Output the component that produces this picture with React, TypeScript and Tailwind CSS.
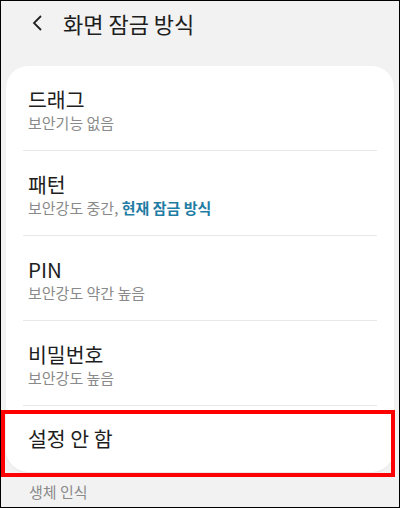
const items = [
  { title: "드래그", sub: "보안기능 없음" },
  { title: "패턴", sub: "보안강도 중간, ", current: "현재 잠금 방식" },
  { title: "PIN", sub: "보안강도 약간 높음" },
  { title: "비밀번호", sub: "보안강도 높음" },
];

const App = () => {
  return (
    <div
      className="relative w-[400px] h-[508px] overflow-hidden border border-black bg-[#f2f2f2] text-[#1e1e1e]"
      style={{ fontFamily: '"Noto Sans CJK KR", "Noto Sans", sans-serif' }}
    >
      {/* header */}
      <div className="flex h-[44px] items-center">
        <svg width="12" height="18" viewBox="0 0 12 18" className="ml-[30px]">
          <polyline points="10,2 3,9 10,16" fill="none" stroke="#222" strokeWidth="1.8" />
        </svg>
        <span className="ml-[20px] text-[22px] leading-none">화면 잠금 방식</span>
      </div>

      {/* list card */}
      <div className="ml-[5px] mr-[5px] mt-[21px] rounded-[22px] bg-white shadow-[0_1px_2px_rgba(0,0,0,0.05)]">
        {items.map((item) => (
          <div key={item.title}>
            <div className="flex h-[84px] flex-col justify-center px-[22px] pt-[2px]">
              <div className="text-[20.5px] leading-[27px]">{item.title}</div>
              <div className="text-[15px] leading-[20px] text-[#8a8a8a]">
                {item.sub}
                {item.current && (
                  <span className="font-bold text-[#1f7ca3]">{item.current}</span>
                )}
              </div>
            </div>
            <div className="mx-[17px] h-px bg-[#e8e8e8]" />
          </div>
        ))}
        <div className="flex h-[66px] items-center px-[22px] pb-[2px]">
          <span className="text-[20.5px] leading-[27px]">설정 안 함</span>
        </div>
      </div>

      <div className="mt-[10px] px-[28px] text-[15px] leading-[20px] text-[#8a8a8a]">생체 인식</div>

      {/* highlight box */}
      <div className="absolute left-0 top-[409px] h-[67px] w-[394px] border-[4px] border-[#ff0000]" />
    </div>
  );
};

export default App;
